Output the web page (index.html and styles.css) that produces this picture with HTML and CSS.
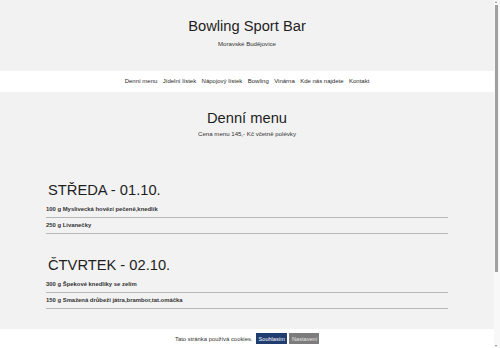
FILE: index.html
```html
<!DOCTYPE html>
<html lang="cs">
<head>
<meta charset="utf-8">
<title>Bowling Sport Bar</title>
<link rel="stylesheet" href="styles.css">
</head>
<body>
<header class="site-header">
  <h1 class="site-title">Bowling Sport Bar</h1>
  <p class="site-sub">Moravské Budějovice</p>
</header>
<nav class="site-nav">
  <a href="#">Denní menu</a>
  <a href="#">Jídelní lístek</a>
  <a href="#">Nápojový lístek</a>
  <a href="#">Bowling</a>
  <a href="#">Vinárna</a>
  <a href="#">Kde nás najdete</a>
  <a href="#">Kontakt</a>
</nav>
<main class="content">
  <h2 class="page-title">Denní menu</h2>
  <p class="page-sub">Cena menu 145,- Kč včetně polévky</p>
  <div class="days">
    <section class="day">
      <h3 class="day-title">STŘEDA - 01.10.</h3>
      <div class="item">100 g Myslivecká hovězí pečeně,knedlík</div>
      <div class="item">250 g Livanečky</div>
    </section>
    <section class="day">
      <h3 class="day-title">ČTVRTEK - 02.10.</h3>
      <div class="item">300 g Špekové knedlíky se zelím</div>
      <div class="item">150 g Smažená drůbeží játra,brambor,tat.omáčka</div>
    </section>
  </div>
</main>
<div class="cookie-bar">
  <span class="cookie-text">Tato stránka používá cookies.</span>
  <button class="btn btn-agree">Souhlasím</button>
  <button class="btn btn-settings">Nastavení</button>
</div>
<div class="scrollbar" aria-hidden="true">
  <span class="sb-arrow sb-up"></span>
  <span class="sb-thumb"></span>
  <span class="sb-arrow sb-down"></span>
</div>
</body>
</html>
```

FILE: styles.css
```css
html {
  background: #f2f2f2;
}
body {
  margin: 0 6px 0 0;
  background: #f2f2f2;
  font-family: "Liberation Sans", Arial, sans-serif;
  color: #222;
}
.site-header {
  padding: 18.4px 0 0;
  height: 52.6px;
  text-align: center;
}
.site-title {
  margin: 0;
  font-size: 14.7px;
  line-height: 17px;
  font-weight: normal;
  color: #1e1e1e;
}
.site-sub {
  margin: 4.3px 0 0;
  font-size: 6.1px;
  line-height: 7px;
  color: #333;
}
.site-nav {
  background: #fff;
  height: 21px;
  display: flex;
  justify-content: center;
  align-items: center;
  gap: 5.45px;
  font-size: 6px;
  line-height: 21px;
}
.site-nav a {
  color: #2a2a2a;
  text-decoration: none;
}
.content {
  padding: 18.4px 0 40px;
}
.page-title {
  margin: 0;
  text-align: center;
  font-size: 14.7px;
  line-height: 17px;
  font-weight: normal;
  color: #1e1e1e;
}
.page-sub {
  margin: 3px 0 0;
  text-align: center;
  font-size: 6.1px;
  line-height: 7px;
  color: #333;
}
.days {
  width: 402px;
  margin: 45px auto 0;
  display: flex;
  flex-direction: column;
  gap: 23.4px;
}
.day-title {
  margin: 0 0 2.5px 2px;
  font-size: 14.7px;
  line-height: 17px;
  font-weight: normal;
  color: #1e1e1e;
}
.item {
  font-size: 5.9px;
  line-height: 7px;
  font-weight: bold;
  color: #333;
  padding: 4px 0 4px;
  border-bottom: 1px solid #b8b8b8;
}
.cookie-bar {
  position: fixed;
  left: 0;
  right: 6px;
  bottom: 0;
  height: 19px;
  background: #fff;
  display: flex;
  justify-content: center;
  align-items: center;
  gap: 2.5px;
  font-size: 5.9px;
}
.cookie-text {
  color: #333;
  margin-right: 0.5px;
}
.btn {
  border: 0;
  font-family: "Liberation Sans", Arial, sans-serif;
  font-size: 5.6px;
  height: 11px;
  padding: 0 3px;
  cursor: pointer;
}
.btn-agree {
  background: #1f3d6f;
  color: #fff;
  width: 31px;
}
.btn-settings {
  background: #7c7c7c;
  color: #e6e6e6;
  width: 30px;
}
.scrollbar {
  position: fixed;
  top: 0;
  right: 0;
  bottom: 0;
  width: 6px;
  background: #f8f8f8;
}
.sb-thumb {
  position: absolute;
  top: 5px;
  left: 1px;
  width: 3px;
  height: 267px;
  background: #a0a0a0;
}
.sb-arrow {
  position: absolute;
  left: 1px;
  width: 0;
  height: 0;
  border-left: 1.5px solid transparent;
  border-right: 1.5px solid transparent;
}
.sb-up {
  top: 1px;
  border-bottom: 2px solid #888;
}
.sb-down {
  bottom: 1px;
  border-top: 2px solid #888;
}
```
